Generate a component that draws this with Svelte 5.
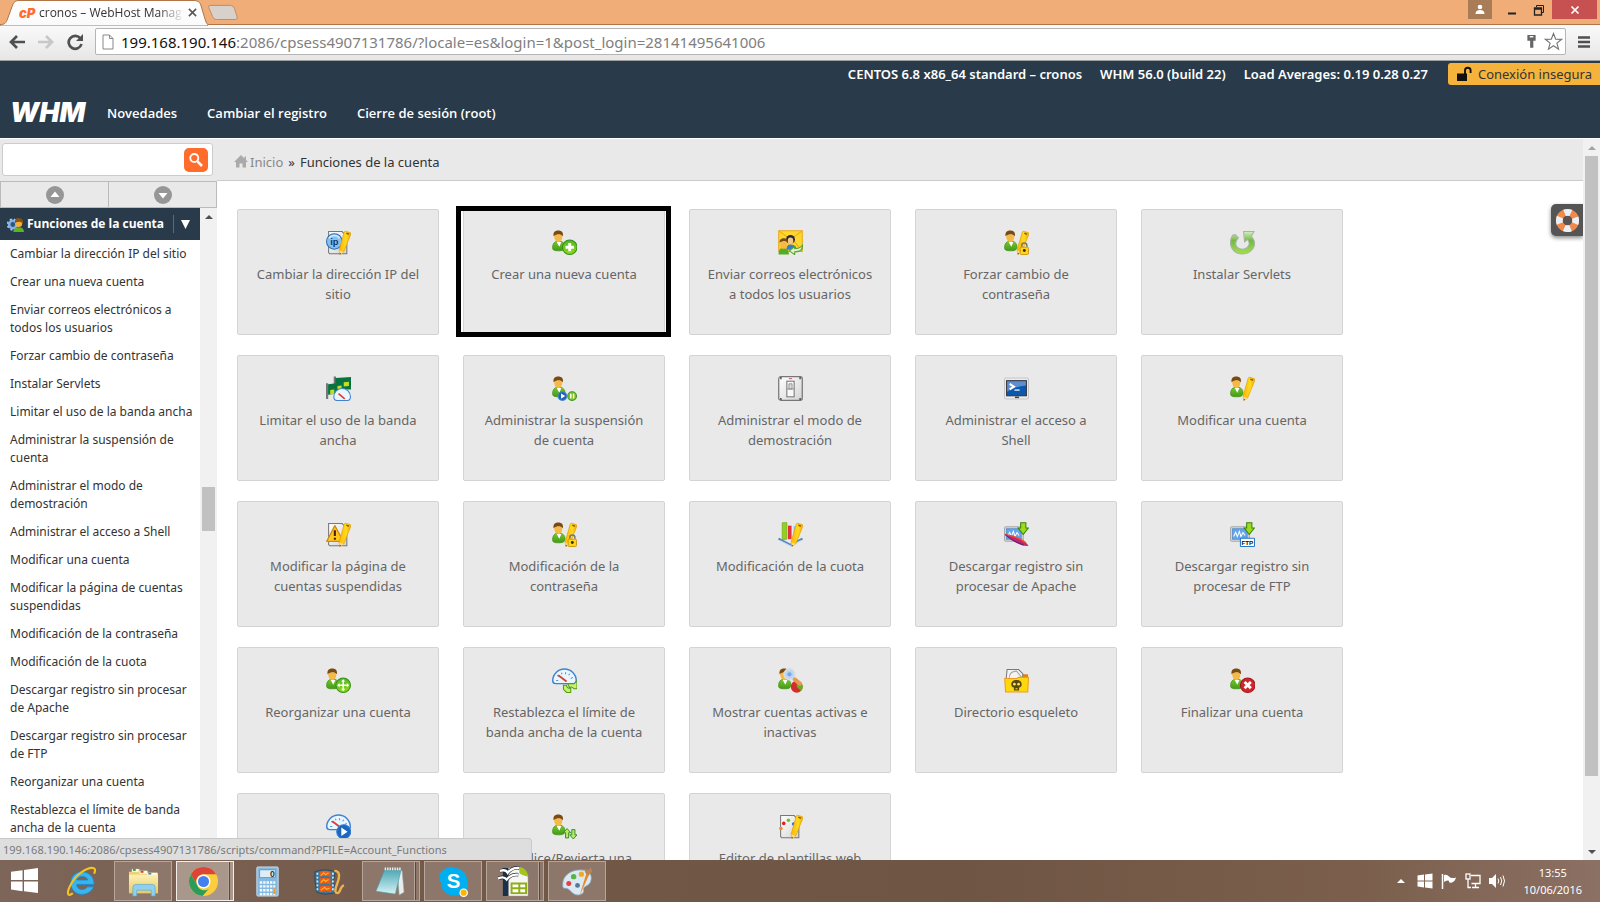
<script lang="ts">
    type Feature = { label: string; icon: string; active?: boolean };

    const features: Feature[] = [
        { label: "Cambiar la dirección IP del sitio", icon: "ip" },
        { label: "Crear una nueva cuenta", icon: "add", active: true },
        { label: "Enviar correos electrónicos a todos los usuarios", icon: "mail" },
        { label: "Forzar cambio de contraseña", icon: "lock" },
        { label: "Instalar Servlets", icon: "reload" },
        { label: "Limitar el uso de la banda ancha", icon: "bandwidth" },
        { label: "Administrar la suspensión de cuenta", icon: "suspend" },
        { label: "Administrar el modo de demostración", icon: "switch" },
        { label: "Administrar el acceso a Shell", icon: "shell" },
        { label: "Modificar una cuenta", icon: "edit" },
        { label: "Modificar la página de cuentas suspendidas", icon: "warning" },
        { label: "Modificación de la contraseña", icon: "lock" },
        { label: "Modificación de la cuota", icon: "quota" },
        { label: "Descargar registro sin procesar de Apache", icon: "apache" },
        { label: "Descargar registro sin procesar de FTP", icon: "ftp" },
        { label: "Reorganizar una cuenta", icon: "move" },
        { label: "Restablezca el límite de banda ancha de la cuenta", icon: "reset" },
        { label: "Mostrar cuentas activas e inactivas", icon: "search" },
        { label: "Directorio esqueleto", icon: "skeleton" },
        { label: "Finalizar una cuenta", icon: "remove" },
        { label: "Ver el uso de la banda ancha", icon: "usage" },
        { label: "Actualice/Revierta una cuenta", icon: "upgrade" },
        { label: "Editor de plantillas web", icon: "template" },
    ];

    const sideItems = features.slice(0, 17);

    const menu = ["Novedades", "Cambiar el registro", "Cierre de sesión (root)"];

    // state: open = framed button, multi = several windows stacked
    const apps = [
        { name: "Internet Explorer", icon: "ie", state: "" },
        { name: "Explorador de archivos", icon: "folder", state: "open" },
        { name: "Google Chrome", icon: "chrome", state: "open multi current" },
        { name: "Calculadora", icon: "calc", state: "" },
        { name: "Movie Maker", icon: "film", state: "" },
        { name: "Bloc de notas", icon: "notepad", state: "open multi" },
        { name: "Skype", icon: "skype", state: "open" },
        { name: "OpenOffice", icon: "office", state: "open multi" },
        { name: "Paint", icon: "paint", state: "open" },
    ];

    let query = $state("");
</script>

{#snippet person()}
    <path d="M.5 17c0-4 2-6 5-6.500h2c3 .5 5 2.500 5 5.500 0 3-2 4-6 4s-6-.5-6-3z" fill="url(#g-green)" stroke="#3c8a12" stroke-width=".6" />
    <path d="M4.500 11.500 7 16l2-4.500z" fill="#fff" />
    <path d="M2 4c0 5 1.500 7.500 4.200 7.500S10 9 10 4z" fill="#f5b945" />
    <path d="M1.500 6C1 2.500 2.500.5 6 .5s5 2 4.500 5.500C9 4.500 8 4 6.500 4S3 4.500 1.500 6z" fill="#7b4a12" />
{/snippet}

{#snippet pencil()}
    <path d="m18.500 1 4.700 1.500c.8.300 1 1 .6 1.700L17 21l-3.500 2.500-1-4L17.500 2z" fill="url(#g-pencil)" stroke="#e09a00" stroke-width=".6" />
    <path d="m12.700 19.500 4.300 1.500-3.500 2.700z" fill="#f3d7a0" />
    <path d="m13.200 22 1.300.6-1.300 1.100z" fill="#333" />
    <path d="m19.500 3 2.500 1" stroke="#8a5a00" stroke-width="1.500" />
{/snippet}

{#snippet sheet()}
    <path d="M2.500 1.500h13l4.500 5v16.200H3.500l-1-1z" fill="url(#g-sheet)" stroke="#777" stroke-width="1" />
{/snippet}

{#snippet gauge()}
    <path d="M.7 12a11.300 11 0 0 1 22.600 0c0 2.500-1 3-2.800 3h-17C1.700 15 .7 14.500.7 12z" fill="#e9f5ff" stroke="#3f83cf" stroke-width="1.400" />
    <path d="M4 12h2M5 7l1.500 1M9 4.500l.7 1.500M13 4v2M17 5.500 16 7M20 9l-2 1" stroke="#4c94d8" stroke-width="1" />
    <path d="m6 7 8 6" stroke="#d8412a" stroke-width="1.800" />
{/snippet}

{#snippet monitor()}
    <rect x=".5" y="4.500" width="18" height="14" rx="1.500" fill="#d7d7d7" stroke="#a9a9a9" />
    <rect x="2.500" y="6.500" width="14" height="10" fill="#62a5ec" stroke="#3d7dc4" stroke-width=".6" />
    <path d="m3.500 14 2-4 1.500 4 2-5 1.500 5 2-4 2 3" fill="none" stroke="#fff" />
    <path d="M16 .7h5v5h2.500L18.500 12 13.500 5.700H16z" fill="#9fdb1d" stroke="#38840c" />
{/snippet}

{#snippet featureIcon(name: string)}
    <svg class="icon" viewBox="0 0 24 24" aria-hidden="true">
        {#if name === "ip"}
            {@render sheet()}
            <circle cx="8" cy="11" r="7.500" fill="#86c0f2" stroke="#2c6fb4" />
            <path d="M3 8a6 6 0 0 1 10 0" fill="none" stroke="#d5eaff" stroke-width="1.500" />
            <text x="8" y="14" class="tiny" fill="#14365f">ip</text>
            {@render pencil()}
        {:else if name === "add"}
            {@render person()}
            <circle cx="17" cy="16.500" r="7" fill="url(#g-lime)" stroke="#319018" />
            <path d="M17 12.500v8M13 16.500h8" stroke="#fff" stroke-width="2.800" />
        {:else if name === "mail"}
            <path d="M.7.700h22.600v20H.7z" fill="#ffd72d" stroke="#e8a81c" />
            <path d="m1 1 11 8L23 1M1 20l8-10M23 20l-8-10" fill="none" stroke="#f0ad20" />
            <circle cx="12" cy="9" r="4.300" fill="#222b38" />
            <ellipse cx="12" cy="10.500" rx="2.700" ry="3.200" fill="#f5c685" />
            <path d="M8 19c0-4 2-5 4-5s6 1 6 5z" fill="#3c7cc4" />
            <path d="M.5 23.500c0-5 2-6 5-6s5 2 5 6z" fill="#55ab22" />
            <ellipse cx="5.500" cy="13.500" rx="3.300" ry="4.500" fill="#f5b945" />
            <path d="M1.500 12c0-3 2-4 4-4s4.500 1 4 4c-2-2-5-2-8 0z" fill="#7b4a12" />
            <path d="M24 14c0 5-3 7-8 7v2.700L11 20l5-4v2c4 0 6-1 8-4z" fill="#dff5cf" stroke="#57a52f" />
        {:else if name === "lock" || name === "edit"}
            {@render person()}
            {@render pencil()}
            {#if name === "lock"}
                <path d="M17 16v-1a2.500 2.500 0 0 1 5 0v1" fill="none" stroke="#777" stroke-width="1.500" />
                <rect x="15.500" y="16.500" width="8" height="7" rx="1" fill="#ffd51e" stroke="#c98c00" stroke-width=".8" />
                <circle cx="19.500" cy="19.700" r="1.400" fill="#3b2b00" />
            {/if}
        {:else if name === "reload"}
            <path d="M13 1.500 23 1.500 20.500 6c4 4.500 4 9 .7 13-4 5-13 5.500-17.700.8C-.5 16-.5 10 2.500 5L5 4.500l3 3C4.500 11.500 5 15 7.500 17c3 2.300 7 2 9.500-.8 2-2.500 1.500-5.500-.3-7.200L14 11.500z" fill="url(#g-reload)" stroke="#a5b7a0" />
        {:else if name === "bandwidth"}
            <path d="M8.500.5v10M1 7v15" stroke="#777" stroke-width="2.200" />
            <path d="m9 2 15-1v12H9zM2 8l15-2v10L2 18z" fill="#087340" />
            <path d="m17 6 5-.5v4L17 10zM4 13.500l4-.5v4l-4 .5zM11 9.500l4-.5v3l-4 .5z" fill="#c3de26" />
            <path d="M7.500 20a8 8 0 0 1 16 0c0 3-1 3.500-3 3.500h-10c-2 0-3-.5-3-3.500z" fill="#e9f5ff" stroke="#3f83cf" />
            <path d="m12 17 6 5" stroke="#d8412a" stroke-width="1.500" />
        {:else if name === "suspend"}
            {@render person()}
            <circle cx="10" cy="19.300" r="4.200" fill="#1e62b8" stroke="#4c87cf" />
            <path d="m8.700 16.800 4 2.500-4 2.500z" fill="#fff" />
            <circle cx="19.300" cy="19.300" r="4.200" fill="#7cc51e" stroke="#3c961d" />
            <path d="M18 17v4.500M20.700 17v4.500" stroke="#fff" stroke-width="1.400" />
        {:else if name === "switch"}
            <rect x=".7" y=".7" width="22.600" height="22.600" rx="2" fill="url(#g-sheet)" stroke="#777" stroke-width="1.200" />
            <rect x="8.500" y="5" width="7" height="15" fill="#f8f8f8" stroke="#777" />
            <path d="M10.500 7.500h3v5h-3zM8.500 12.500h7" fill="#ddd" stroke="#888" stroke-width=".8" />
            <path d="M2 2h1.500M20.500 2H22M2 22h1.500M20.500 22H22" stroke="#555" stroke-width="2" />
            <path d="M10.500 2.500h3" stroke="#d56" />
        {:else if name === "shell"}
            <rect x=".5" y="2" width="23" height="20" rx="1.500" fill="#ececec" stroke="#c5c5c5" />
            <rect x="2.500" y="4.500" width="19" height="14.500" fill="#0d58ad" stroke="#31343c" />
            <path d="M3 5h18v4q-10 1-18 6z" fill="#5d8fd0" />
            <path d="m5.500 7.500 4 2.700-4 2.700" fill="none" stroke="#fff" stroke-width="2" />
            <path d="M10 13.500h5" stroke="#fff" stroke-width="1.200" />
            <path d="M10.500 20.500h4" stroke="#444" stroke-width="1.500" />
        {:else if name === "warning"}
            {@render sheet()}
            <path d="M8.500 3.500 16.500 18.500H.7z" fill="#ffc720" stroke="#d48613" stroke-width="1.200" stroke-linejoin="round" />
            <path d="M8.500 8v5.500M8.500 15v2" stroke="#4a2200" stroke-width="2" />
            {@render pencil()}
        {:else if name === "quota"}
            <path d="m.5 16 11.500 6 11.500-6" fill="none" stroke="#4b86c8" stroke-width="2" />
            <path d="m2 18 10 5 10-5" fill="none" stroke="#c5dcf2" />
            <path d="M15 4h3v11h-3z" fill="#8fc0f0" />
            <path d="M9.500 3.500h3.500v13H9.500z" fill="#df3344" />
            <path d="M4 .7 8.500.5v16L4 17z" fill="#91cf20" stroke="#6ea818" stroke-width=".6" />
            {@render pencil()}
        {:else if name === "apache"}
            {@render monitor()}
            <path d="M1 12c8 1 20 5 22.500 11C16 23.500 7 18 1 12z" fill="#c0266b" />
            <path d="M1 12c6 1 15 4 20 8" fill="none" stroke="#ee4a36" stroke-width="1.500" />
            <path d="M1 12c5 5 11 8 18 10" fill="none" stroke="#59257a" />
        {:else if name === "ftp"}
            {@render monitor()}
            <rect x="10" y="15.500" width="13.500" height="8" rx=".5" fill="#fff" stroke="#2577c8" />
            <text x="16.700" y="22" class="ftp" fill="#111">FTP</text>
        {:else if name === "move"}
            {@render person()}
            <circle cx="16.500" cy="16.500" r="7" fill="url(#g-lime)" stroke="#319018" />
            <path d="M16.500 12v9M12 16.500h9" stroke="#fff" stroke-width="1.400" />
            <path d="m16.500 10.700 2 2.300h-4zM16.500 22.300l2-2.300h-4zM10.700 16.500l2.300-2v4zM22.300 16.500l-2.300-2v4z" fill="#fff" />
        {:else if name === "reset"}
            {@render gauge()}
            <path d="M24 12v8h-3c-1-2-3-2-4-1l-2-4h4c2 1 3 0 5-3z" fill="#c9ef70" stroke="#4f9d16" />
            <path d="M11 16.500h3c0 2 2 3 4 3v4h-4l-3-3z" fill="#c9ef70" stroke="#4f9d16" />
        {:else if name === "search"}
            {@render person()}
            <circle cx="11" cy="6" r="5" fill="#b5d5f6" stroke="#d9dde2" stroke-width="1.800" />
            <circle cx="11" cy="6" r="2" fill="#7aa9df" />
            <circle cx="18" cy="18" r="5.700" fill="#d52b2b" />
            <path d="M18 12.300a5.700 5.700 0 0 1 4 9.700l-4-4z" fill="#5cb51c" />
            <path d="m16 11 5 4" stroke="#e39a52" stroke-width="4" stroke-linecap="round" />
        {:else if name === "skeleton"}
            <path d="M16 6h7v7h-7z" fill="#e07f13" />
            <path d="M2 11 3 1.500h11l4 4V11z" fill="#f4f4f4" stroke="#777" />
            <path d="M5 10c0-5 2-7 7-7l5 6" fill="none" stroke="#aaa" />
            <path d="M.7 10H12l2-1h9.500l-.7 14H1.500z" fill="#ffd80c" stroke="#f09a1e" />
            <path d="M12 11.500c-3.500 0-5 2-5 4.300 0 1.700 1 2.700 2.500 3v2.700h5v-2.700c1.500-.3 2.500-1.300 2.500-3 0-2.300-1.500-4.300-5-4.300z" fill="#55490d" />
            <circle cx="10" cy="15.500" r="1.300" fill="#ffe24a" />
            <circle cx="14" cy="15.500" r="1.300" fill="#ffe24a" />
            <path d="M11 20h2" stroke="#ffe24a" stroke-width="1" />
        {:else if name === "remove"}
            {@render person()}
            <circle cx="17" cy="16.500" r="7" fill="#d0252b" stroke="#a0161c" />
            <path d="m14 13.500 6 6M20 13.500l-6 6" stroke="#fff" stroke-width="2.700" />
        {:else if name === "usage"}
            {@render gauge()}
            <circle cx="17" cy="17" r="6.700" fill="#1b66bf" stroke="#2f7bd2" />
            <path d="m14.700 13 6 4-6 4z" fill="#fff" />
        {:else if name === "upgrade"}
            {@render person()}
            <path d="m14.500 14 3.500 4h-2v5h-3v-5h-2zM20.500 24l-3.500-4h2v-5h3v5h2z" fill="#b8e86c" stroke="#2f8a1d" stroke-width=".9" />
        {:else if name === "template"}
            {@render sheet()}
            <circle cx="5.500" cy="9" r="1.700" fill="#e21d26" />
            <circle cx="10" cy="6" r="1.700" fill="#72bf27" />
            <circle cx="15" cy="9.500" r="1.700" fill="#1d78c1" />
            <circle cx="2.800" cy="14" r="1.700" fill="#f68b1f" />
            {@render pencil()}
        {/if}
    </svg>
{/snippet}

{#snippet appIcon(name: string)}
    <svg class="app-icon" viewBox="0 0 32 32" aria-hidden="true">
        {#if name === "ie"}
            <path d="M29 19H11c.5 6 8 7 11 2.500h6.500C24 33 5 32 5 17.500 5 2 29 2 29 19zm-18-4.500h11.500C21.500 9.500 12 9.500 11 14.500z" fill="#38b5ef" stroke="#1689cf" stroke-width=".8" />
            <path d="M7 28C1 33 .5 27 5 19 10 9 22 1 28 2c3 .6 2 4 1 6" fill="none" stroke="#f5c31f" stroke-width="2.200" />
        {:else if name === "folder"}
            <path d="M1 6h3V3h8v2h8v2h11v21H1z" fill="#ecd277" />
            <path d="M4 3h7v3H4z" fill="#fffbe8" /><path d="M5 3h3v2H5z" fill="#26a13c" />
            <path d="M12 5h8v3h-8z" fill="#fffbe8" /><path d="M13 5h3v2h-3z" fill="#d8402c" />
            <path d="M20 7h10v3H20z" fill="#fffbe8" /><path d="M21 7h3v2h-3z" fill="#2a8ad8" />
            <path d="M1 9h30v19H1z" fill="url(#g-folder)" />
            <path d="M5 31v-9q0-3 3-3h17q3 0 3 3v9h-4v-6H9v6z" fill="#8fd0ef" stroke="#5aa7cf" stroke-width=".7" />
        {:else if name === "chrome"}
            <circle cx="16" cy="16" r="15" fill="#fccd3d" />
            <path d="M3 8.500A15 15 0 0 1 29 8.500H16a7.500 7.500 0 0 0-6.500 11.200z" fill="#dc4437" />
            <path d="M3 8.500a15 15 0 0 0 12 22.500l6.500-7.600A7.500 7.500 0 0 1 9.500 19.700z" fill="#2b9d58" />
            <circle cx="16" cy="16" r="7.200" fill="#fff" />
            <circle cx="16" cy="16" r="5.700" fill="#4380f0" />
        {:else if name === "calc"}
            <rect x="5" y="1" width="22" height="30" rx="1" fill="#84b9df" stroke="#c9e2f3" />
            <rect x="8" y="4" width="16" height="8" fill="#dceefa" stroke="#5585a8" stroke-width=".7" />
            <text x="21" y="11" class="tiny" fill="#333">0</text>
            <path d="M8 17h16M8 21h16M8 25h16M8 29h16" stroke="#f2f9ff" stroke-width="2.500" stroke-dasharray="2.500 1" />
            <path d="M22 23h2v6h-2z" fill="#f39a1f" />
        {:else if name === "film"}
            <path d="M1 6q10-4 21 0l-2 10 3 11Q12 31 3 27L1 16z" fill="#3f789c" stroke="#254a63" />
            <path d="M6 6q5-2 11 0v5q-6-2-11 0zM6 13q5-2 11 0v6q-6-2-11 0zM6 21q5-2 12 0v6q-6-2-12 0z" fill="#ef5a14" />
            <path d="m7 10 3-3 2 2 3-2M7 17l3-3 2 2 3-2M7 25l4-3 2 2 3-1" fill="none" stroke="#ffb52c" stroke-width="1.200" />
            <path d="M3.500 7v20M19.500 7v20" stroke="#d4ecf8" stroke-width="1.800" stroke-dasharray="2 2" />
            <path d="M21 5c7 0 5 8 3 13s-3 10 0 10c4 0 2-7 7-8" fill="none" stroke="#f0b04a" stroke-width="2.500" />
        {:else if name === "notepad"}
            <path d="m24 3 5 2 2 22-5 3z" fill="#e8eef0" stroke="#9aa" stroke-width=".6" />
            <path d="M11 4h17l-6 25-20-3z" fill="url(#g-note)" stroke="#4b9aa8" stroke-width=".6" />
            <path d="M11 3h17" stroke="#eee" stroke-width="3" stroke-dasharray="1.500 1" />
        {:else if name === "skype"}
            <path d="M9 2c3-2 7-1 8 0 8 0 14 7 13 15 3 7-2 14-10 13C11 32 3 26 3 17-1 11 3 4 9 2z" fill="#00aff0" />
            <text x="16" y="23" class="skype" fill="#fff">S</text>
            <circle cx="26.500" cy="27.500" r="3.800" fill="#ffb400" stroke="#fff" stroke-width="1.200" />
        {:else if name === "office"}
            <path d="M5 2h6v29H5z" fill="#17304c" />
            <path d="M11 2h13l7 8v21H11z" fill="#f6f6f6" stroke="#999" stroke-width=".5" />
            <path d="M22 1c4 0 9 4 9 10-4-1-8-2-9-4z" fill="#a5c51d" />
            <path d="M13 17h17v12H13z" fill="#8eae13" />
            <path d="M15 19h6v3h-6zM23 19h5v3h-5zM15 24h6v3h-6zM23 24h5v3h-5z" fill="#fff" />
            <path d="M2 5q6-2 8 2 5-6 12-5M0 13q6-3 9 1 5-6 12-5" fill="none" stroke="#222" stroke-width="3.600" />
            <path d="M2 5q6-2 8 2 5-6 12-5M0 13q6-3 9 1 5-6 12-5" fill="none" stroke="#fff" stroke-width="2.400" />
        {:else if name === "paint"}
            <path d="M1 22C-1 11 8 4 19 4c8 0 12 4 11 10s-5 6-7 8 1 5-3 7c-6 3-10-2-13-5-3-2-5 0-6-2z" fill="#dbe9f3" stroke="#8fb2cc" stroke-width=".8" />
            <circle cx="7" cy="18" r="2.600" fill="#e34242" /><circle cx="12" cy="11" r="2.800" fill="#58b545" />
            <circle cx="20" cy="8.500" r="2.700" fill="#f0a928" /><circle cx="16" cy="20" r="2.500" fill="#5c7690" />
            <path d="M18 31 25 8l3 1z" fill="#e88a25" />
            <path d="m24 7-1-4 4 1 3-3 1 5-4 4z" fill="#b88558" />
        {/if}
    </svg>
{/snippet}

<!-- Shared gradients -->
<svg class="defs" width="0" height="0" aria-hidden="true">
    <defs>
        <linearGradient id="g-green" x2="0" y2="1"><stop stop-color="#7ac92d" /><stop offset="1" stop-color="#429a18" /></linearGradient>
        <linearGradient id="g-lime" x2="0" y2="1"><stop stop-color="#54b52a" /><stop offset="1" stop-color="#8fd916" /></linearGradient>
        <linearGradient id="g-pencil"><stop stop-color="#ffb400" /><stop offset=".6" stop-color="#ffdb20" /><stop offset="1" stop-color="#f4a900" /></linearGradient>
        <linearGradient id="g-sheet" x2="1" y2="1"><stop stop-color="#fff" /><stop offset="1" stop-color="#d4d4d4" /></linearGradient>
        <linearGradient id="g-reload" x2="0" y2="1"><stop stop-color="#d5efbd" /><stop offset=".4" stop-color="#75b845" /><stop offset="1" stop-color="#a4e04d" /></linearGradient>
        <linearGradient id="g-folder" x2="0" y2="1"><stop stop-color="#fcf0b4" /><stop offset="1" stop-color="#e8cb66" /></linearGradient>
        <linearGradient id="g-note" x2="0" y2="1"><stop stop-color="#4fa7b4" /><stop offset="1" stop-color="#d4f3f5" /></linearGradient>
        <linearGradient id="g-tab" x2="0" y2="1"><stop stop-color="#fff" /><stop offset="1" stop-color="#fafafa" /></linearGradient>
    </defs>
</svg>

<div class="screen">
    <div class="tabstrip">
        <div class="tab">
            <svg class="tab-shape" viewBox="0 0 208 26" preserveAspectRatio="none" aria-hidden="true">
                <path d="M0 26V24.500C5 24.500 6 23 7.500 19L13 4Q14.500.5 18 .5H195Q199 .5 200.500 4L205 19Q206.500 24.500 208 24.500V26z" fill="url(#g-tab)" stroke="#b0764a" />
            </svg>
            <span class="cp-logo">cP</span>
            <span class="tab-title">cronos – WebHost Manag</span>
            <button class="tab-close" aria-label="Cerrar pestaña">
                <svg viewBox="0 0 10 10"><path d="m1 1 8 8M9 1 1 9" stroke="#555" stroke-width="1.700" /></svg>
            </button>
        </div>
        <button class="new-tab" aria-label="Nueva pestaña">
            <svg viewBox="0 0 34 18"><path d="M3 1.500h22q3 0 4 3l3 9q1 3-2 3H10q-3 0-4-3L2 4Q1 1.500 3 1.500z" fill="#d8d0ca" stroke="#c08a62" /></svg>
        </button>
        <div class="window-controls">
            <button class="win user" aria-label="Usuario">
                <svg viewBox="0 0 12 12"><circle cx="6" cy="3" r="2.300" fill="#fff" /><path d="M1.500 10q0-4 4.500-4t4.500 4z" fill="#fff" /></svg>
            </button>
            <button class="win" aria-label="Minimizar">
                <svg viewBox="0 0 12 12"><path d="M2 9.500h8" stroke="#222" stroke-width="2" /></svg>
            </button>
            <button class="win" aria-label="Restaurar">
                <svg viewBox="0 0 12 12"><path d="M3.500 3V1.500h7v7H9" fill="none" stroke="#222" /><path d="M1.500 4h7v7h-7zM1.500 5h7" fill="none" stroke="#222" stroke-width="1.300" /></svg>
            </button>
            <button class="win close" aria-label="Cerrar">
                <svg viewBox="0 0 12 12"><path d="m2.500 2.500 7 7M9.500 2.500l-7 7" stroke="#fff" stroke-width="1.700" /></svg>
            </button>
        </div>
    </div>

    <div class="toolbar">
        <button class="tool" aria-label="Atrás">
            <svg viewBox="0 0 18 18"><path d="M17 9H3M9 3 3 9l6 6" fill="none" stroke="#505050" stroke-width="2.700" /></svg>
        </button>
        <button class="tool" aria-label="Adelante">
            <svg viewBox="0 0 18 18"><path d="M1 9h14M9 3l6 6-6 6" fill="none" stroke="#c8c8c8" stroke-width="2.700" /></svg>
        </button>
        <button class="tool" aria-label="Recargar">
            <svg viewBox="0 0 18 18"><path d="M14.500 5.500A6.500 6.500 0 1 0 15.500 11" fill="none" stroke="#505050" stroke-width="2.700" /><path d="M17 1v7h-7z" fill="#505050" /></svg>
        </button>
        <div class="omnibox">
            <svg class="page" viewBox="0 0 12 16" aria-hidden="true"><path d="M1 1h6.500L11 4.500V15H1zM7.500 1v3.500H11" fill="#fff" stroke="#888" /></svg>
            <div class="url"><b>199.168.190.146</b>:2086/cpsess4907131786/?locale=es&amp;login=1&amp;post_login=28141495641006</div>
            <svg class="key" viewBox="0 0 12 16" aria-hidden="true"><path d="M1.500 1h9v6.500H8V15H4.500V7.500h-3z" fill="#666" /><path d="M4 3h4" stroke="#fff" stroke-width="1.500" /></svg>
            <svg class="star" viewBox="0 0 20 20" aria-hidden="true"><path d="m10 1.500 2.300 6 6.200.2-4.900 4 1.700 6.300-5.300-3.600L4.700 18l1.700-6.300-4.900-4 6.200-.2z" fill="#fff" stroke="#777" stroke-width="1.200" /></svg>
        </div>
        <button class="menu" aria-label="Menú">
            <svg viewBox="0 0 14 14"><path d="M1 2.500h12M1 7h12M1 11.500h12" stroke="#505050" stroke-width="2.700" /></svg>
        </button>
    </div>

    <header>
        <div class="stats">
            <span>CENTOS 6.8 x86_64 standard – cronos</span>
            <span>WHM 56.0 (build 22)</span>
            <span>Load Averages: 0.19 0.28 0.27</span>
            <a class="insecure" href="#seguridad">
                <svg viewBox="0 0 16 16" aria-hidden="true"><path d="M1 7.500h10V15H1z" fill="#111" /><path d="M9 8V4.500a2.800 2.800 0 0 1 5.600 0V7" fill="none" stroke="#111" stroke-width="1.900" /></svg>
                Conexión insegura
            </a>
        </div>
        <nav>
            <a class="logo" href="#inicio">WHM</a>
            {#each menu as item}
                <a href="#menu">{item}</a>
            {/each}
        </nav>
    </header>

    <div class="body">
        <aside>
            <form class="search">
                <input type="text" aria-label="Buscar" bind:value={query} />
                <button type="button" aria-label="Buscar">
                    <svg viewBox="0 0 16 16"><circle cx="6.300" cy="6" r="4" fill="none" stroke="#fff" stroke-width="1.800" /><path d="m9.500 9.500 4.500 4.500" stroke="#fff" stroke-width="2.500" /></svg>
                </button>
            </form>
            <div class="collapse">
                <button aria-label="Contraer todo">
                    <svg viewBox="0 0 18 18"><circle cx="9" cy="9" r="9" fill="#969696" /><path d="m9 5.500 4.500 5.500h-9z" fill="#fff" /></svg>
                </button>
                <button aria-label="Expandir todo">
                    <svg viewBox="0 0 18 18"><circle cx="9" cy="9" r="9" fill="#969696" /><path d="M9 12.500 4.500 7h9z" fill="#fff" /></svg>
                </button>
            </div>
            <div class="side-scroll">
                <div class="side-list">
                    <h2>
                        <svg viewBox="0 0 16 16" aria-hidden="true">
                            <circle cx="5.500" cy="8" r="3.500" fill="#33557c" stroke="#7fb0e6" stroke-width="2.500" /><circle cx="5.500" cy="8" r="5" fill="none" stroke="#a4c8f0" stroke-width="1.500" stroke-dasharray="2 2" />
                            <path d="M6 15q0-4.500 5-4.500t5 4.500z" fill="#5cb324" /><circle cx="11" cy="7" r="3.300" fill="#f3b03c" /><path d="M7.500 6.500Q7 1.500 11.500 2t3.500 5q-3-3-7.500-.5z" fill="#8a5314" />
                        </svg>
                        <span>Funciones de la cuenta</span>
                        <button aria-label="Contraer"><svg viewBox="0 0 8 8"><path d="M0 0h8L4 8z" fill="#fff" /></svg></button>
                    </h2>
                    <ul>
                        {#each sideItems as item}
                            <li><a href="#funcion">{item.label}</a></li>
                        {/each}
                    </ul>
                </div>
                <div class="bar side-bar" aria-hidden="true">
                    <svg viewBox="0 0 8 4"><path d="m4 0 4 4H0z" fill="#505050" /></svg>
                    <i></i>
                </div>
            </div>
        </aside>

        <main>
            <div class="breadcrumb">
                <a href="#inicio">
                    <svg viewBox="0 0 14 14" aria-hidden="true"><path d="M7 0 0 7h2v5.500h3.500V8.500h3v4H12V7h2l-2-2V1.500h-1.500v2z" fill="#aaa" /></svg>
                    Inicio
                </a>
                <span>»</span>
                <span>Funciones de la cuenta</span>
            </div>
            <div class="grid">
                {#each features as feature}
                    <a class="card" class:active={feature.active} href="#funcion">
                        {@render featureIcon(feature.icon)}
                        <span>{feature.label}</span>
                    </a>
                {/each}
            </div>
            <button class="help" aria-label="Ayuda">
                <svg viewBox="0 0 26 26"><circle cx="13" cy="13" r="8.500" fill="none" stroke="#f0894a" stroke-width="7" /><circle cx="13" cy="13" r="8.500" fill="none" stroke="#e9f1f8" stroke-width="7" stroke-dasharray="6.700 6.650" stroke-dashoffset="3.350" /></svg>
            </button>
        </main>

        <div class="bar main-bar" aria-hidden="true">
            <svg viewBox="0 0 8 4"><path d="m4 0 4 4H0z" fill="#a3a3a3" /></svg>
            <i></i>
            <svg viewBox="0 0 8 4"><path d="M0 0h8L4 4z" fill="#505050" /></svg>
        </div>

        <div class="status">199.168.190.146:2086/cpsess4907131786/scripts/command?PFILE=Account_Functions</div>
    </div>

    <footer>
        <button class="start" aria-label="Inicio">
            <svg viewBox="0 0 28 26"><path d="M0 4 12 2.300V12.500H0zM13.500 2.100 28 0v12.500H13.500zM0 14h12v10L0 22.300zM13.500 14H28v12l-14.500-2z" fill="#fff" /></svg>
        </button>
        {#each apps as app}
            <button class="app {app.state}" aria-label={app.name}>{@render appIcon(app.icon)}</button>
        {/each}
        <div class="tray">
            <svg class="up" viewBox="0 0 8 4" aria-hidden="true"><path d="m4 0 4 4H0z" fill="#fff" /></svg>
            <svg viewBox="0 0 16 16" aria-hidden="true"><path d="M.5 2.500 7 1.600v6H.5zM8 1.500 15.500.5v7H8zM.5 8.500H7v6l-6.500-.9zM8 8.500h7.500v7L8 14.600z" fill="#fff" /></svg>
            <svg viewBox="0 0 16 16" aria-hidden="true"><path d="M1.500 1v15" stroke="#fff" stroke-width="1.500" /><path d="M3 2q3-1 5 1.500t7 1q-1 4-4 5T8 8.500 3 9z" fill="#fff" /></svg>
            <svg viewBox="0 0 16 16" aria-hidden="true"><path d="M6 2.500h9v8H6.500M10.500 11v3M7 14.500h7M3 6v8.500h3" fill="none" stroke="#fff" stroke-width="1.300" /><rect x="1" y="1" width="4" height="5" fill="none" stroke="#fff" stroke-width="1.300" /></svg>
            <svg viewBox="0 0 16 16" aria-hidden="true"><path d="M0 5h3l4-4v14l-4-4H0z" fill="#fff" /><path d="M9 5.500q1.500 2.500 0 5M11.500 4q2.500 4 0 8M14 2.500q3 5.500 0 11" fill="none" stroke="#fff" /></svg>
            <time><span>13:55</span><span>10/06/2016</span></time>
        </div>
    </footer>
</div>

<style>
    :global(body) {
        margin: 0;
    }

    .screen {
        display: flex;
        flex-direction: column;
        height: 100vh;
        overflow: hidden;
        background: #fff;
        font: 13px/20px "Noto Sans", "Open Sans", sans-serif;
        color: #333;
    }
    .screen * {
        box-sizing: border-box;
    }
    .defs {
        position: absolute;
    }
    svg {
        display: block;
        flex: none;
    }
    a {
        color: inherit;
        text-decoration: none;
    }
    button {
        display: flex;
        align-items: center;
        justify-content: center;
        flex: none;
        padding: 0;
        border: 0;
        background: none;
        font: inherit;
    }

    /* Browser window */
    .tabstrip {
        display: flex;
        flex: none;
        height: 25px;
        background: #f0ad78;
        border-bottom: 1px solid #b0764a;
    }
    .tab {
        position: relative;
        display: flex;
        align-items: center;
        width: 208px;
        height: 25px;
        padding: 0 8px 0 19px;
    }
    .tab-shape {
        position: absolute;
        inset: 0;
        width: 100%;
        height: 26px;
    }
    .cp-logo {
        position: relative;
        width: 20px;
        font: italic 900 13px/20px Inter, sans-serif;
        color: #ff6c2c;
    }
    .tab-title {
        position: relative;
        flex: 1;
        overflow: hidden;
        white-space: nowrap;
        font-family: "Open Sans", sans-serif;
        font-size: 12px;
        mask-image: linear-gradient(to right, #000 82%, transparent);
    }
    .tab-close {
        position: relative;
        width: 16px;
    }
    .tab-close svg {
        width: 9px;
    }
    .new-tab {
        width: 30px;
    }
    .new-tab svg {
        width: 32px;
    }
    .window-controls {
        display: flex;
        margin-left: auto;
        padding-right: 3px;
    }
    .win {
        width: 27px;
        height: 19px;
    }
    .win svg {
        width: 12px;
    }
    .win.user {
        width: 24px;
        margin-right: 6px;
        background: #a97c58;
    }
    .win.close {
        width: 45px;
        background: #c75050;
    }

    .toolbar {
        display: flex;
        flex: none;
        align-items: center;
        height: 36px;
        padding: 0 9px 2px 8px;
        gap: 11px;
        background: linear-gradient(#fafafa, #e6e6e6);
        border-bottom: 1px solid #a0a0a0;
    }
    .tool svg {
        width: 18px;
    }
    .omnibox {
        display: flex;
        flex: 1;
        align-items: center;
        gap: 7px;
        height: 27px;
        padding: 0 2px 0 6px;
        border: 1px solid #b5b5b5;
        border-radius: 2px;
        background: #fff;
    }
    .page {
        width: 12px;
    }
    .url {
        flex: 1;
        font-size: 15px;
        color: #808080;
        white-space: nowrap;
    }
    .url b {
        font-weight: 400;
        color: #111;
    }
    .key {
        width: 11px;
    }
    .star {
        width: 19px;
    }
    .menu svg {
        width: 14px;
    }

    /* WHM header */
    header {
        flex: none;
        padding-top: 2px;
        background: #293a4a;
        color: #fff;
        font-weight: 600;
        border-bottom: 1px solid #fff;
    }
    .stats {
        display: flex;
        justify-content: flex-end;
        gap: 18px;
        line-height: 22px;
    }
    .insecure {
        display: flex;
        align-items: center;
        gap: 6px;
        margin-left: 2px;
        padding: 0 8px;
        border-radius: 3px 0 0 3px;
        background: #f6b33c;
        color: #333;
        font-weight: 400;
    }
    .insecure svg {
        width: 16px;
    }
    nav {
        display: flex;
        align-items: center;
        gap: 30px;
        height: 53px;
        padding: 2px 10px 0;
        font-family: "Open Sans", sans-serif;
    }
    .logo {
        width: 67px;
        font: italic 900 27px/27px Inter, sans-serif;
    }

    .body {
        position: relative;
        display: flex;
        flex: 1;
        min-height: 0;
    }

    /* Sidebar */
    aside {
        display: flex;
        flex-direction: column;
        width: 217px;
        flex: none;
        background: #e9e9e9;
    }
    .search {
        display: flex;
        align-items: center;
        height: 33px;
        margin: 4px 4px 5px 2px;
        padding: 0 4px;
        background: #fff;
        border: 1px solid #ccc;
        border-radius: 3px;
    }
    .search input {
        flex: 1;
        min-width: 0;
        border: 0;
        outline: 0;
        font: inherit;
    }
    .search button {
        width: 24px;
        height: 24px;
        border-radius: 5px;
        background: #ff6c2c;
    }
    .search svg {
        width: 16px;
    }
    .collapse {
        display: flex;
        height: 27px;
        border: 1px solid #bbb;
        border-width: 1px 1px 1px 0;
    }
    .collapse button {
        flex: 1;
        border-left: 1px solid #bbb;
    }
    .collapse svg {
        width: 18px;
    }
    .side-scroll {
        display: flex;
        flex: 1;
        min-height: 0;
        background: #fff;
    }
    .side-list {
        flex: 1;
        min-width: 0;
        overflow: hidden;
    }
    h2 {
        display: flex;
        align-items: center;
        gap: 3px;
        height: 32px;
        margin: 0;
        padding: 0 10px 0 7px;
        background: #293a4a;
        color: #fff;
        font-family: "Open Sans", sans-serif;
        font-size: 12px;
        font-weight: 700;
    }
    h2 > svg {
        width: 17px;
    }
    h2 span {
        flex: 1;
        white-space: nowrap;
    }
    h2 button {
        width: 17px;
        height: 18px;
        padding-left: 6px;
        border-left: 1px solid #5c6a77;
    }
    h2 button svg {
        width: 9px;
    }
    ul {
        margin: 0;
        padding: 0;
        list-style: none;
    }
    li {
        padding: 5px 0 5px 10px;
        font-size: 12px;
        line-height: 18px;
    }

    /* Scrollbars */
    .bar {
        display: flex;
        flex-direction: column;
        align-items: center;
        flex: none;
        width: 17px;
        background: #f1f1f1;
    }
    .bar svg {
        width: 8px;
        margin: 7px 0 6px;
    }
    .bar i {
        width: 13px;
        background: #c1c1c1;
    }
    .side-bar i {
        height: 44px;
        margin-top: 262px;
    }
    .main-bar i {
        flex: 0 0 86%;
    }
    .main-bar svg:last-child {
        margin-top: auto;
    }

    /* Content */
    main {
        position: relative;
        flex: 1;
        min-width: 0;
        overflow: hidden;
    }
    .breadcrumb {
        display: flex;
        align-items: center;
        gap: 5px;
        height: 42px;
        padding: 5px 0 0 17px;
        background: #e9e9e9;
        border-bottom: 1px solid #ccc;
    }
    .breadcrumb a {
        display: flex;
        align-items: center;
        gap: 2px;
        color: #888;
    }
    .breadcrumb svg {
        width: 14px;
    }
    .grid {
        display: grid;
        grid-template-columns: repeat(auto-fill, 202px);
        grid-auto-rows: 126px;
        gap: 20px 24px;
        padding: 28px 20px;
    }
    .card {
        position: relative;
        display: flex;
        flex-direction: column;
        align-items: center;
        gap: 9px;
        padding: 20px 14px 0;
        border: 1px solid #d4d4d4;
        border-radius: 2px;
        background: #e9e9e9;
        color: #666;
        text-align: center;
    }
    .card.active::after {
        content: "";
        position: absolute;
        inset: -4px -7px -3px -8px;
        border: 5px solid #000;
    }
    .icon {
        width: 25px;
        height: 25px;
    }
    .tiny {
        font: bold 9px "Liberation Sans", sans-serif;
        text-anchor: middle;
    }
    .ftp {
        font: bold 6px "Liberation Sans", sans-serif;
        text-anchor: middle;
    }
    .skype {
        font: bold 21px "Liberation Sans", sans-serif;
        text-anchor: middle;
    }
    .help {
        position: absolute;
        top: 65px;
        right: 0;
        width: 32px;
        height: 32px;
        border-radius: 5px 0 0 5px;
        background: #555;
        box-shadow: 0 2px 4px #888;
    }
    .help svg {
        width: 25px;
    }
    .status {
        position: absolute;
        left: 0;
        bottom: 0;
        width: 532px;
        height: 22px;
        padding-left: 3px;
        border: 1px solid #c8c8c8;
        border-width: 1px 1px 0 0;
        border-radius: 0 4px 0 0;
        background: #dedede;
        color: #7a7a7a;
        font-size: 11px;
        line-height: 21px;
        white-space: nowrap;
    }

    /* Windows taskbar */
    footer {
        display: flex;
        flex: none;
        align-items: center;
        gap: 4px;
        height: 42px;
        background: linear-gradient(to right, #7d6559, #725846 30%, #6f5544 60%, #7b5f4c 85%, #8b7064);
    }
    .start {
        width: 48px;
        height: 40px;
    }
    .start svg {
        width: 27px;
    }
    .app {
        width: 58px;
        height: 40px;
    }
    .app-icon {
        width: 31px;
        height: 31px;
    }
    .open {
        border: 1px solid #b5a59a;
        background: #8d776a;
    }
    /* second window edge at the right of the button */
    .multi {
        background: linear-gradient(to right, transparent calc(100% - 5px), #b5a59a calc(100% - 5px), #b5a59a calc(100% - 4px), #5c4636 calc(100% - 4px), #5c4636 calc(100% - 3px), transparent calc(100% - 3px)) #8d776a;
        padding-right: 4px;
    }
    .current {
        border-color: #f3eeea;
        background-color: #aa978c;
    }
    .tray {
        display: flex;
        align-items: center;
        gap: 8px;
        margin-left: auto;
        padding-right: 18px;
        color: #fff;
    }
    .tray svg {
        width: 16px;
    }
    .tray .up {
        width: 8px;
        margin-right: 4px;
    }
    time {
        display: flex;
        flex-direction: column;
        align-items: center;
        margin-left: 10px;
        font-size: 11px;
        line-height: 17px;
    }
</style>
